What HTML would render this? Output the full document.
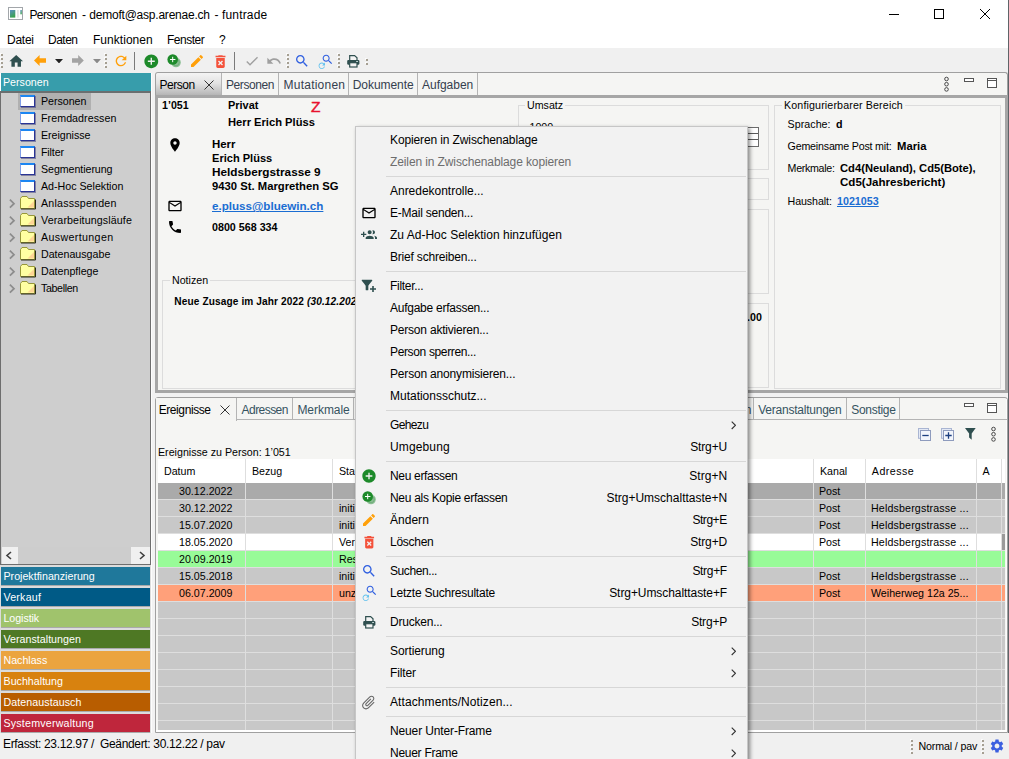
<!DOCTYPE html>
<html lang="de"><head><meta charset="utf-8"><title>Personen - funtrade</title>
<style>
*{box-sizing:border-box;margin:0;padding:0}
html,body{width:1009px;height:759px;overflow:hidden;background:#fff}
body{position:relative;font-family:"Liberation Sans",Arial,sans-serif;font-size:10.667px;color:#000}
.a{position:absolute;display:block}
.t{position:absolute;white-space:pre;line-height:14px;height:14px}
.s{font-size:12px;letter-spacing:-0.1px;line-height:16px;height:16px}
.b{font-weight:bold}
.tab{position:absolute;top:0;height:22px;border-right:1px solid #b4b4b4;font-size:12px;line-height:16px;padding:4px 0 0 0;color:#34404e;white-space:pre}
.bar{position:absolute;left:1px;width:149px;height:18px;color:#fff;padding:2px 0 0 2.5px;line-height:14px;white-space:pre;box-shadow:0 1px 0 #aaa}
.ti{position:absolute;left:20px;width:15px;height:12px;background:#fff;border:1px solid #2a3494;border-left-color:#7f9de6;border-top:2px solid #1c86f2;box-shadow:1px 1px 0 rgba(70,70,130,.55)}
.fo{position:absolute;left:20px;width:15px;height:12px}
.tl{position:absolute;left:41px;white-space:pre;line-height:14px}
.gb{position:absolute;border:1px solid #dcdcdc}
.gl{position:absolute;background:#f5f5f3;padding:0 2px;white-space:pre;line-height:14px;top:-8px}
.row{position:absolute;left:158px;width:847px;height:16px}
.c{position:absolute;top:0;height:17px;line-height:16px;white-space:pre}
.mi{position:absolute;left:390px;font-size:12px;line-height:22px;height:22px;white-space:pre;color:#000}
.sc{position:absolute;right:282px;font-size:12px;letter-spacing:-0.1px;line-height:22px;height:22px;white-space:pre;text-align:right}
.sep{position:absolute;left:386px;width:360px;height:1px;background:#d7d7d7}
</style></head><body>

<svg class="a" style="left:8px;top:7px" width="15" height="13" viewBox="0 0 15 13"><defs><linearGradient id="tg" x1="0" y1="0" x2=".4" y2="1"><stop offset="0" stop-color="#5b8fc4"/><stop offset="1" stop-color="#3aa24e"/></linearGradient></defs><rect x=".5" y=".5" width="14" height="12" fill="#fff" stroke="#a2a6aa"/><rect x="2" y="3" width="5.300" height="7.600" fill="url(#tg)"/><rect x="9" y="3" width="1.800" height="7.600" fill="#e4e4e4"/><rect x="12.200" y="3" width="1.800" height="4.300" fill="url(#tg)" opacity=".8"/></svg>
<div class="t s" style="left:29.4px;top:7px;letter-spacing:-0.524px;">Personen</div>
<div class="t s" style="left:81.9px;top:7px">-</div>
<div class="t s" style="left:89.3px;top:7px;letter-spacing:-0.222px;">demoft@asp.arenae.ch</div>
<div class="t s" style="left:214.5px;top:7px">-</div>
<div class="t s" style="left:222px;top:7px;letter-spacing:0.167px;">funtrade</div>
<svg class="a" style="left:880px;top:0" width="129" height="30" viewBox="0 0 129 30"><path d="M9 14.5h10" stroke="#000" fill="none"/><rect x="54.500" y="9.500" width="9" height="9" stroke="#000" fill="none"/><path d="M100 9l10 10M110 9l-10 10" stroke="#000" fill="none"/></svg>
<div class="t s" style="left:7px;top:32px;letter-spacing:-0.253px;">Datei</div>
<div class="t s" style="left:48px;top:32px;letter-spacing:-0.505px;">Daten</div>
<div class="t s" style="left:93px;top:32px;letter-spacing:0.036px;">Funktionen</div>
<div class="t s" style="left:167px;top:32px;letter-spacing:-0.497px;">Fenster</div>
<div class="t s" style="left:219px;top:32px;letter-spacing:-1.674px;">?</div>
<div class="a" style="left:0;top:48px;width:1009px;height:25px;background:#f0f0f0"></div>
<i class="a" style="left:1px;top:54px;width:2px;height:2px;background:#a59f92;box-shadow:-1px -1px 0 #fbfbfb"></i><i class="a" style="left:1px;top:58px;width:2px;height:2px;background:#a59f92;box-shadow:-1px -1px 0 #fbfbfb"></i><i class="a" style="left:1px;top:62px;width:2px;height:2px;background:#a59f92;box-shadow:-1px -1px 0 #fbfbfb"></i><i class="a" style="left:1px;top:66px;width:2px;height:2px;background:#a59f92;box-shadow:-1px -1px 0 #fbfbfb"></i>
<svg class="a" style="left:8px;top:52.8px" width="16.4" height="16.4" viewBox="0 0 24 24"><path fill="#2f4f4f" d="M10 20v-6h4v6h5v-8h3L12 3 2 12h3v8z"/></svg>
<svg class="a" style="left:33.900px;top:55.300px" width="12.300" height="11" viewBox="0 0 12.300 11"><path fill="#ffa00a" d="M0 5.500L5.600 0v3.200h6.700v4.600H5.600V11z"/></svg>
<svg class="a" style="left:54.600px;top:58.900px" width="8" height="4.400" viewBox="0 0 8 4.400"><path fill="#222" d="M0 0h8L4 4.400z"/></svg>
<svg class="a" style="left:72.100px;top:55.300px" width="11.800" height="11" viewBox="0 0 11.800 11"><path fill="#a3a3a3" d="M11.800 5.500L6.200 0v3.200H0v4.600h6.200V11z"/></svg>
<svg class="a" style="left:93.300px;top:58.900px" width="8" height="4.400" viewBox="0 0 8 4.400"><path fill="#8a8a8a" d="M0 0h8L4 4.400z"/></svg>
<i class="a" style="left:105px;top:54px;width:2px;height:2px;background:#a59f92;box-shadow:-1px -1px 0 #fbfbfb"></i><i class="a" style="left:105px;top:58px;width:2px;height:2px;background:#a59f92;box-shadow:-1px -1px 0 #fbfbfb"></i><i class="a" style="left:105px;top:62px;width:2px;height:2px;background:#a59f92;box-shadow:-1px -1px 0 #fbfbfb"></i><i class="a" style="left:105px;top:66px;width:2px;height:2px;background:#a59f92;box-shadow:-1px -1px 0 #fbfbfb"></i>
<svg class="a" style="left:112.6px;top:52.8px" width="16" height="16" viewBox="0 0 24 24"><path fill="#ffa00a" d="M17.65 6.35C16.2 4.9 14.21 4 12 4c-4.42 0-7.99 3.58-7.99 8s3.57 8 7.99 8c3.73 0 6.84-2.55 7.73-6h-2.08c-.82 2.33-3.04 4-5.65 4-3.31 0-6-2.69-6-6s2.69-6 6-6c1.66 0 3.14.69 4.22 1.78L13 11h7V4l-2.35 2.35z"/></svg>
<div class="a" style="left:134px;top:52px;width:1px;height:18px;background:#7a7a7a"></div>
<svg class="a" style="left:142.8px;top:52.6px" width="16.6" height="16.6" viewBox="0 0 24 24"><path fill="#1d8a2a" d="M12 2C6.48 2 2 6.48 2 12s4.48 10 10 10 10-4.48 10-10S17.52 2 12 2zm5 11h-4v4h-2v-4H7v-2h4V7h2v4h4v2z"/></svg>
<svg class="a" style="left:165.7px;top:53px" width="16" height="16" viewBox="0 0 16 16"><circle cx="10" cy="9.500" r="4.800" fill="#8cbf94"/><circle cx="10" cy="9.500" r="3.300" fill="none" stroke="#6aa874" stroke-width=".8"/><circle cx="6.700" cy="6.500" r="5.300" fill="#1d8a2a"/><path d="M6.700 3.800v5.400M4 6.500h5.400" stroke="#fff" stroke-width="1"/></svg>
<svg class="a" style="left:188.8px;top:52.5px" width="16" height="16" viewBox="0 0 24 24"><path fill="#ffa00a" d="M3 17.25V21h3.75L17.81 9.94l-3.75-3.75L3 17.25zM20.71 7.04c.39-.39.39-1.02 0-1.41l-2.34-2.34c-.39-.39-1.02-.39-1.41 0l-1.83 1.83 3.75 3.75 1.83-1.83z"/></svg>
<svg class="a" style="left:212px;top:52.5px" width="17" height="17" viewBox="0 0 24 24"><path fill="#f4523b" d="M6 19c0 1.1.9 2 2 2h8c1.1 0 2-.9 2-2V7H6v12zm2.46-7.12l1.41-1.41L12 12.59l2.12-2.12 1.41 1.41L13.41 14l2.12 2.12-1.41 1.41L12 15.41l-2.12 2.12-1.41-1.41L10.59 14l-2.13-2.12zM15.5 4l-1-1h-5l-1 1H5v2h14V4z"/></svg>
<div class="a" style="left:234px;top:52px;width:1px;height:18px;background:#7a7a7a"></div>
<svg class="a" style="left:243.5px;top:53px" width="16" height="16" viewBox="0 0 24 24"><path fill="#a0a0a0" d="M9 16.17L4.83 12l-1.42 1.41L9 19 21 7l-1.41-1.41z"/></svg>
<svg class="a" style="left:266px;top:53px" width="16" height="16" viewBox="0 0 24 24"><path fill="#a0a0a0" d="M12.5 8c-2.65 0-5.05.99-6.9 2.6L2 7v9h9l-3.62-3.62c1.39-1.16 3.16-1.88 5.12-1.88 3.54 0 6.55 2.31 7.6 5.5l2.37-.78C21.08 11.03 17.15 8 12.5 8z"/></svg>
<i class="a" style="left:287px;top:54px;width:2px;height:2px;background:#a59f92;box-shadow:-1px -1px 0 #fbfbfb"></i><i class="a" style="left:287px;top:58px;width:2px;height:2px;background:#a59f92;box-shadow:-1px -1px 0 #fbfbfb"></i><i class="a" style="left:287px;top:62px;width:2px;height:2px;background:#a59f92;box-shadow:-1px -1px 0 #fbfbfb"></i><i class="a" style="left:287px;top:66px;width:2px;height:2px;background:#a59f92;box-shadow:-1px -1px 0 #fbfbfb"></i>
<svg class="a" style="left:294px;top:53px" width="16" height="16" viewBox="0 0 24 24"><path fill="#2f5fe0" d="M15.5 14h-.79l-.28-.27C15.41 12.59 16 11.11 16 9.5 16 5.91 13.09 3 9.5 3S3 5.91 3 9.5 5.91 16 9.5 16c1.61 0 3.09-.59 4.23-1.57l.27.28v.79l5 4.99L20.49 19l-4.99-5zm-6 0C7.01 14 5 11.99 5 9.5S7.01 5 9.5 5 14 7.01 14 9.5 11.99 14 9.5 14z"/></svg>
<svg class="a" style="left:321px;top:52.7px" width="13" height="13" viewBox="0 0 24 24"><path fill="#2f5fe0" d="M15.5 14h-.79l-.28-.27C15.41 12.59 16 11.11 16 9.5 16 5.91 13.09 3 9.5 3S3 5.91 3 9.5 5.91 16 9.5 16c1.61 0 3.09-.59 4.23-1.57l.27.28v.79l5 4.99L20.49 19l-4.99-5zm-6 0C7.01 14 5 11.99 5 9.5S7.01 5 9.5 5 14 7.01 14 9.5 11.99 14 9.5 14z"/></svg>
<svg class="a" style="left:317px;top:60.8px" width="9.6" height="9.6" viewBox="0 0 24 24"><path fill="#5fc0ee" d="M17.65 6.35C16.2 4.9 14.21 4 12 4c-4.42 0-7.99 3.58-7.99 8s3.57 8 7.99 8c3.73 0 6.84-2.55 7.73-6h-2.08c-.82 2.33-3.04 4-5.65 4-3.31 0-6-2.69-6-6s2.69-6 6-6c1.66 0 3.14.69 4.22 1.78L13 11h7V4l-2.35 2.35z"/></svg>
<i class="a" style="left:338px;top:54px;width:2px;height:2px;background:#a59f92;box-shadow:-1px -1px 0 #fbfbfb"></i><i class="a" style="left:338px;top:58px;width:2px;height:2px;background:#a59f92;box-shadow:-1px -1px 0 #fbfbfb"></i><i class="a" style="left:338px;top:62px;width:2px;height:2px;background:#a59f92;box-shadow:-1px -1px 0 #fbfbfb"></i><i class="a" style="left:338px;top:66px;width:2px;height:2px;background:#a59f92;box-shadow:-1px -1px 0 #fbfbfb"></i>
<svg class="a" style="left:346.8px;top:54.8px" width="13" height="13" viewBox="0 0 13 13"><path d="M2.700 5.200V.6h4.900l2.400 2.200v2.400" fill="#f4f4f4" stroke="#2f4f4f" stroke-width="1.200"/><rect x=".2" y="4.900" width="12.200" height="4.800" rx="1.200" fill="#2f4f4f"/><rect x="2.700" y="7.700" width="7.300" height="4.300" fill="#f4f4f4" stroke="#2f4f4f" stroke-width="1.200"/><rect x="9.200" y="6" width="1.700" height="1" fill="#cfe0e0"/></svg>
<i class="a" style="left:366px;top:59px;width:2px;height:2px;background:#a59f92;box-shadow:-1px -1px 0 #fbfbfb"></i><i class="a" style="left:366px;top:63px;width:2px;height:2px;background:#a59f92;box-shadow:-1px -1px 0 #fbfbfb"></i>
<div class="a" style="left:1px;top:73px;width:150px;height:19px;background:#379dab"></div>
<div class="t" style="left:3px;top:75px;color:#fff">Personen</div>
<div class="a" style="left:0;top:91px;width:151px;height:474px;background:#cecece;border:1px solid #6e6e6e;border-top:2px solid #6a6f70"></div>
<div class="a" style="left:18px;top:93px;width:73px;height:17px;background:#b0b0b0"></div>
<i class="ti" style="top:95px"></i>
<div class="tl" style="top:94px;letter-spacing:-0.038px">Personen</div>
<i class="ti" style="top:112px"></i>
<div class="tl" style="top:111px;letter-spacing:0.067px">Fremdadressen</div>
<i class="ti" style="top:129px"></i>
<div class="tl" style="top:128px;letter-spacing:-0.034px">Ereignisse</div>
<i class="ti" style="top:146px"></i>
<div class="tl" style="top:145px;letter-spacing:-0.141px">Filter</div>
<i class="ti" style="top:163px"></i>
<div class="tl" style="top:162px;letter-spacing:-0.062px">Segmentierung</div>
<i class="ti" style="top:180px"></i>
<div class="tl" style="top:179px;letter-spacing:-0.001px">Ad-Hoc Selektion</div>
<svg class="a" style="left:9px;top:199px" width="7" height="10" viewBox="0 0 7 10"><path d="M.9 .7L5 4.700.9 8.700" stroke="#8c8c8c" fill="none" stroke-width="1.700"/></svg>
<svg class="fo" style="top:196px;width:16px;height:14px" width="16" height="14" viewBox="0 0 16 14"><path d="M.5 12.500v-10l1.500-2h5l1.500 2h6v10z" fill="#ffffa2" stroke="#97973a"/><path d="M14 11.500H7.500L14 5z" fill="#ffc890" opacity=".75"/><path d="M1 13h14.500V3.500" stroke="#2a2a1a" fill="none"/></svg>
<div class="tl" style="top:196px;letter-spacing:0.213px">Anlassspenden</div>
<svg class="a" style="left:9px;top:216px" width="7" height="10" viewBox="0 0 7 10"><path d="M.9 .7L5 4.700.9 8.700" stroke="#8c8c8c" fill="none" stroke-width="1.700"/></svg>
<svg class="fo" style="top:213px;width:16px;height:14px" width="16" height="14" viewBox="0 0 16 14"><path d="M.5 12.500v-10l1.500-2h5l1.500 2h6v10z" fill="#ffffa2" stroke="#97973a"/><path d="M14 11.500H7.500L14 5z" fill="#ffc890" opacity=".75"/><path d="M1 13h14.500V3.500" stroke="#2a2a1a" fill="none"/></svg>
<div class="tl" style="top:213px;letter-spacing:0.115px">Verarbeitungsläufe</div>
<svg class="a" style="left:9px;top:233px" width="7" height="10" viewBox="0 0 7 10"><path d="M.9 .7L5 4.700.9 8.700" stroke="#8c8c8c" fill="none" stroke-width="1.700"/></svg>
<svg class="fo" style="top:230px;width:16px;height:14px" width="16" height="14" viewBox="0 0 16 14"><path d="M.5 12.500v-10l1.500-2h5l1.500 2h6v10z" fill="#ffffa2" stroke="#97973a"/><path d="M14 11.500H7.500L14 5z" fill="#ffc890" opacity=".75"/><path d="M1 13h14.500V3.500" stroke="#2a2a1a" fill="none"/></svg>
<div class="tl" style="top:230px;letter-spacing:0.364px">Auswertungen</div>
<svg class="a" style="left:9px;top:250px" width="7" height="10" viewBox="0 0 7 10"><path d="M.9 .7L5 4.700.9 8.700" stroke="#8c8c8c" fill="none" stroke-width="1.700"/></svg>
<svg class="fo" style="top:247px;width:16px;height:14px" width="16" height="14" viewBox="0 0 16 14"><path d="M.5 12.500v-10l1.500-2h5l1.500 2h6v10z" fill="#ffffa2" stroke="#97973a"/><path d="M14 11.500H7.500L14 5z" fill="#ffc890" opacity=".75"/><path d="M1 13h14.500V3.500" stroke="#2a2a1a" fill="none"/></svg>
<div class="tl" style="top:247px;letter-spacing:0.001px">Datenausgabe</div>
<svg class="a" style="left:9px;top:267px" width="7" height="10" viewBox="0 0 7 10"><path d="M.9 .7L5 4.700.9 8.700" stroke="#8c8c8c" fill="none" stroke-width="1.700"/></svg>
<svg class="fo" style="top:264px;width:16px;height:14px" width="16" height="14" viewBox="0 0 16 14"><path d="M.5 12.500v-10l1.500-2h5l1.500 2h6v10z" fill="#ffffa2" stroke="#97973a"/><path d="M14 11.500H7.500L14 5z" fill="#ffc890" opacity=".75"/><path d="M1 13h14.500V3.500" stroke="#2a2a1a" fill="none"/></svg>
<div class="tl" style="top:264px;letter-spacing:-0.003px">Datenpflege</div>
<svg class="a" style="left:9px;top:284px" width="7" height="10" viewBox="0 0 7 10"><path d="M.9 .7L5 4.700.9 8.700" stroke="#8c8c8c" fill="none" stroke-width="1.700"/></svg>
<svg class="fo" style="top:281px;width:16px;height:14px" width="16" height="14" viewBox="0 0 16 14"><path d="M.5 12.500v-10l1.500-2h5l1.500 2h6v10z" fill="#ffffa2" stroke="#97973a"/><path d="M14 11.500H7.500L14 5z" fill="#ffc890" opacity=".75"/><path d="M1 13h14.500V3.500" stroke="#2a2a1a" fill="none"/></svg>
<div class="tl" style="top:281px;letter-spacing:-0.36px">Tabellen</div>
<div class="a" style="left:2px;top:547px;width:148px;height:17px;background:#f0f0f0"></div>
<div class="a" style="left:18px;top:547px;width:113px;height:17px;background:#cdcdcd"></div>
<svg class="a" style="left:5px;top:551px" width="8" height="9" viewBox="0 0 8 9"><path d="M6 1L2 4.500 6 8" stroke="#404040" fill="none" stroke-width="1.600"/></svg>
<svg class="a" style="left:138px;top:551px" width="8" height="9" viewBox="0 0 8 9"><path d="M2 1l4 3.500L2 8" stroke="#404040" fill="none" stroke-width="1.600"/></svg>
<div class="a" style="left:0;top:565px;width:152px;height:168px;background:#dcdcdc"></div>
<div class="bar" style="top:567px;background:#1f789b;letter-spacing:-0.001px">Projektfinanzierung</div>
<div class="bar" style="top:588px;background:#005a86;letter-spacing:0.206px">Verkauf</div>
<div class="bar" style="top:609px;background:#a0c36c;letter-spacing:-0.067px">Logistik</div>
<div class="bar" style="top:630px;background:#4e7824;letter-spacing:0.022px">Veranstaltungen</div>
<div class="bar" style="top:651px;background:#eba43f;letter-spacing:-0.01px">Nachlass</div>
<div class="bar" style="top:672px;background:#d8820f;letter-spacing:0.019px">Buchhaltung</div>
<div class="bar" style="top:693px;background:#b85d00;letter-spacing:0.07px">Datenaustausch</div>
<div class="bar" style="top:714px;background:#bf263c;letter-spacing:0.203px">Systemverwaltung</div>
<div class="a" style="left:151px;top:73px;width:857px;height:660px;background:#f2f2f2;border-left:1px solid #fdfdfd"></div>
<div class="a" style="left:155px;top:72px;width:853px;height:321px;background:#f5f5f3;border:1px solid #a0a0a0;border-bottom:0;border-radius:3px 3px 0 0"></div>
<div class="a" style="left:156px;top:73px;width:851px;height:23px;">
<div class="tab" style="left:0;width:66px;height:23px;padding-left:3.500px;letter-spacing:-0.484px;color:#000;background:linear-gradient(#f4f4f4,#e2e2e2 45%,#b2b2b2);border-radius:3px 0 0 0">Person<svg class="a" style="left:47.500px;top:6.500px" width="10" height="10" viewBox="0 0 10 10"><path d="M.5 .5l9 9M9.500 .5l-9 9" stroke="#333" fill="none" stroke-width="1"/></svg></div>
<div class="tab" style="left:66px;width:57px;padding-left:4px;letter-spacing:-0.424px">Personen</div>
<div class="tab" style="left:123px;width:70px;padding-left:4.600000000000023px;letter-spacing:0.225px">Mutationen</div>
<div class="tab" style="left:193px;width:69px;padding-left:3.6999999999999886px;letter-spacing:-0.046px">Dokumente</div>
<div class="tab" style="left:262px;width:60px;padding-left:4.100000000000023px;letter-spacing:-0.04px">Aufgaben</div>
<div class="a" style="left:66px;top:22px;width:785px;height:1px;background:#b4b4b4"></div>
</div>
<svg class="a" style="left:943px;top:76px" width="7" height="17" viewBox="0 0 7 17"><g fill="none" stroke="#484848" stroke-width="1"><circle cx="3.500" cy="3" r="1.800"/><circle cx="3.500" cy="8.200" r="1.800"/><circle cx="3.500" cy="13.400" r="1.800"/></g></svg>
<div class="a" style="left:964px;top:78px;width:10px;height:4px;border:1px solid #555;background:#fff"></div><div class="a" style="left:987px;top:78px;width:10px;height:10px;border:1px solid #555;border-top:3px double #555;background:#fff"></div>
<div class="a" style="left:155px;top:95px;width:853px;height:298px;border:solid #a6a6a6;border-width:3px 3px 3px 3px"></div>
<div class="t b" style="left:162px;top:98px">1’051</div>
<div class="t b" style="left:227.5px;top:98px;transform:scaleX(1.0254);transform-origin:0 50%;">Privat</div>
<div class="t" style="left:311px;top:99px;font-size:15.500px;line-height:16px;height:16px;color:#e8112d;-webkit-text-stroke:.45px #e8112d">Z</div>
<div class="t b" style="left:227.5px;top:115px;transform:scaleX(1.0482);transform-origin:0 50%;">Herr Erich Plüss</div>
<svg class="a" style="left:167px;top:137px" width="16" height="16" viewBox="0 0 24 24"><path fill="#000" d="M12 2C8.13 2 5 5.13 5 9c0 5.25 7 13 7 13s7-7.75 7-13c0-3.87-3.13-7-7-7zm0 9.5c-1.38 0-2.5-1.12-2.5-2.5s1.12-2.5 2.5-2.5 2.5 1.12 2.5 2.5-1.12 2.5-2.5 2.5z"/></svg>
<div class="t b" style="left:212.2px;top:137px;transform:scaleX(1.0712);transform-origin:0 50%;">Herr</div>
<div class="t b" style="left:212.2px;top:151px;transform:scaleX(1.0379);transform-origin:0 50%;">Erich Plüss</div>
<div class="t b" style="left:212.2px;top:165px;transform:scaleX(1.1044);transform-origin:0 50%;">Heldsbergstrasse 9</div>
<div class="t b" style="left:212.2px;top:179px;transform:scaleX(1.0581);transform-origin:0 50%;">9430 St. Margrethen SG</div>
<svg class="a" style="left:167px;top:198px" width="16" height="16" viewBox="0 0 24 24"><path fill="#000" d="M20 4H4c-1.1 0-1.99.9-1.99 2L2 18c0 1.1.9 2 2 2h16c1.1 0 2-.9 2-2V6c0-1.1-.9-2-2-2zm0 14H4V8l8 5 8-5v10zm-8-7L4 6h16l-8 5z"/></svg>
<div class="t b" style="left:212.2px;top:199px;transform:scaleX(1.0902);transform-origin:0 50%;color:#1a6dd2;text-decoration:underline">e.pluss@bluewin.ch</div>
<svg class="a" style="left:167px;top:219px" width="16" height="16" viewBox="0 0 24 24"><path fill="#000" d="M6.62 10.79c1.44 2.83 3.76 5.14 6.59 6.59l2.2-2.2c.27-.27.67-.36 1.02-.24 1.12.37 2.33.57 3.57.57.55 0 1 .45 1 1V20c0 .55-.45 1-1 1-9.39 0-17-7.61-17-17 0-.55.45-1 1-1h3.5c.55 0 1 .45 1 1 0 1.25.2 2.45.57 3.57.11.35.03.74-.25 1.02l-2.2 2.2z"/></svg>
<div class="t b" style="left:212.2px;top:220px;transform:scaleX(1.0053);transform-origin:0 50%;">0800 568 334</div>
<div class="gb" style="left:162px;top:280px;width:350px;height:109px"><span class="gl" style="left:7px">Notizen</span></div>
<div class="t b" style="left:174.300px;top:295px;font-size:10.100px;letter-spacing:0.123px">Neue Zusage im Jahr 2022 <i>(30.12.2022)</i></div>
<div class="gb" style="left:518px;top:105px;width:251px;height:65px"><span class="gl" style="left:6px">Umsatz</span></div>
<div class="t" style="left:529.500px;top:120px">1000</div>
<div class="a" style="left:740px;top:127px;width:19px;height:20px;border:1px solid #6c6c6c;background:linear-gradient(#fff 0 5px,#5a5a5a 5px 6px,#fff 6px 11px,#5a5a5a 11px 12px,#fff 12px)"></div>
<div class="gb" style="left:518px;top:178px;width:251px;height:22px"></div>
<div class="gb" style="left:518px;top:209px;width:251px;height:85px"></div>
<div class="gb" style="left:518px;top:303px;width:251px;height:85px"></div>
<div class="t b" style="left:741.200px;top:310px">0.00</div>
<div class="gb" style="left:774px;top:105px;width:227px;height:284px"><span class="gl" style="left:7px;letter-spacing:0.143px">Konfigurierbarer Bereich</span></div>
<div class="t" style="left:787.6px;top:117px;letter-spacing:0.044px;">Sprache:</div>
<div class="t b" style="left:836px;top:117px;">d</div>
<div class="t" style="left:787.6px;top:139px;letter-spacing:-0.194px;">Gemeinsame Post mit:</div>
<div class="t b" style="left:897.3px;top:139px;transform:scaleX(1.0587);transform-origin:0 50%;">Maria</div>
<div class="t" style="left:787.6px;top:161px;letter-spacing:-0.311px;">Merkmale:</div>
<div class="t b" style="left:840.3px;top:161px;transform:scaleX(1.0512);transform-origin:0 50%;">Cd4(Neuland), Cd5(Bote),</div>
<div class="t b" style="left:840.3px;top:175px;transform:scaleX(1.0842);transform-origin:0 50%;">Cd5(Jahresbericht)</div>
<div class="t" style="left:787.6px;top:194px;letter-spacing:-0.095px;">Haushalt:</div>
<div class="t b" style="left:837.4px;top:194px;transform:scaleX(1.0042);transform-origin:0 50%;color:#1a6dd2;text-decoration:underline">1021053</div>
<div class="a" style="left:155px;top:397px;width:853px;height:336px;background:#f5f5f3;border:1px solid #a0a0a0;border-radius:3px 3px 0 0"></div>
<div class="a" style="left:156px;top:730px;width:851px;height:2px;background:#fff"></div><div class="a" style="left:1006px;top:399px;width:1px;height:333px;background:#fcfcfc"></div>
<div class="a" style="left:156px;top:398px;width:851px;height:22px;">
<div class="tab" style="left:0;width:81px;height:23px;padding-left:2.700px;letter-spacing:-0.414px;color:#000;background:#f5f5f3">Ereignisse<svg class="a" style="left:63.500px;top:6.500px" width="10" height="10" viewBox="0 0 10 10"><path d="M.5 .5l9 9M9.500 .5l-9 9" stroke="#333" fill="none" stroke-width="1"/></svg></div>
<div class="tab" style="left:81px;width:56px;padding-left:4.599999999999994px;letter-spacing:-0.556px;color:#35535f">Adressen</div>
<div class="tab" style="left:137px;width:61px;padding-left:4.399999999999977px;letter-spacing:-0.039px;color:#35535f">Merkmale</div>
<div class="tab" style="left:198px;width:54px;padding-left:4px;letter-spacing:-0.674px;color:#35535f">Spenden</div>
<div class="tab" style="left:543px;width:55px;padding-left:4px;letter-spacing:0.257px;color:#35535f">Aktionen</div>
<div class="tab" style="left:598px;width:93px;padding-left:4.2000000000000455px;letter-spacing:-0.228px;color:#35535f">Veranstaltungen</div>
<div class="tab" style="left:691px;width:53px;padding-left:4.2000000000000455px;letter-spacing:-0.286px;color:#35535f">Sonstige</div>
<div class="a" style="left:81px;top:21px;width:770px;height:1px;background:#b4b4b4"></div>
</div>
<div class="a" style="left:964px;top:403px;width:10px;height:4px;border:1px solid #555;background:#fff"></div><div class="a" style="left:987px;top:403px;width:10px;height:10px;border:1px solid #555;border-top:3px double #555;background:#fff"></div>
<svg class="a" style="left:918px;top:428px" width="13" height="13" viewBox="0 0 13 13"><rect x=".5" y=".5" width="10" height="9.800" fill="#e3e9f5" stroke="#a9b5d2"/><rect x="2.500" y="2.500" width="10" height="10" fill="#f2f5fc" stroke="#8e9bbd"/><path d="M4.300 7.500h6.400" stroke="#1c3f80" stroke-width="1.300"/></svg>
<svg class="a" style="left:941px;top:428px" width="13" height="13" viewBox="0 0 13 13"><rect x=".5" y=".5" width="10" height="9.800" fill="#e3e9f5" stroke="#a9b5d2"/><rect x="2.500" y="2.500" width="10" height="10" fill="#f2f5fc" stroke="#8e9bbd"/><path d="M4.300 7.500h6.400M7.500 4.300v6.400" stroke="#1c3f80" stroke-width="1.300"/></svg>
<svg class="a" style="left:964.500px;top:427.900px" width="11" height="12" viewBox="0 0 11 12"><path fill="#2f4f4f" d="M0 0h10.700L6.700 5.400v6.400L4.100 9.500V5.400z"/></svg>
<svg class="a" style="left:989.7px;top:426.4px" width="7" height="17" viewBox="0 0 7 17"><g fill="none" stroke="#484848" stroke-width="1"><circle cx="3.500" cy="3" r="1.800"/><circle cx="3.500" cy="8.200" r="1.800"/><circle cx="3.500" cy="13.400" r="1.800"/></g></svg>
<div class="t" style="left:158px;top:445px">Ereignisse zu Person: 1’051</div>
<div class="a" style="left:158px;top:459px;width:847px;height:271px;background:#c8c8c8"></div>
<div class="a" style="left:158px;top:459px;width:847px;height:24px;background:#fff"></div>
<div class="t" style="left:164px;top:464px;">Datum</div>
<div class="t" style="left:252px;top:464px;">Bezug</div>
<div class="t" style="left:339px;top:464px;">Status</div>
<div class="t" style="left:820px;top:464px;letter-spacing:-0.021px;">Kanal</div>
<div class="t" style="left:871.8px;top:464px;letter-spacing:0.478px;">Adresse</div>
<div class="t" style="left:982.6px;top:464px;">A</div>
<div class="row" style="top:483px;background:#aaaaaa"><span class="c" style="left:21px">30.12.2022</span><span class="c" style="left:181px"></span><span class="c" style="left:661px">Post</span><span class="c" style="left:713px;letter-spacing:0px"></span></div>
<div class="a" style="left:158px;top:499px;width:847px;height:1px;background:#dedede"></div>
<div class="row" style="top:500px;background:#c8c8c8"><span class="c" style="left:21px">30.12.2022</span><span class="c" style="left:181px">initial</span><span class="c" style="left:661px">Post</span><span class="c" style="left:713px;letter-spacing:0.15px">Heldsbergstrasse ...</span></div>
<div class="a" style="left:158px;top:516px;width:847px;height:1px;background:#dedede"></div>
<div class="row" style="top:517px;background:#c8c8c8"><span class="c" style="left:21px">15.07.2020</span><span class="c" style="left:181px">initial</span><span class="c" style="left:661px">Post</span><span class="c" style="left:713px;letter-spacing:0.15px">Heldsbergstrasse ...</span></div>
<div class="a" style="left:158px;top:533px;width:847px;height:1px;background:#dedede"></div>
<div class="row" style="top:534px;background:#ffffff"><span class="c" style="left:21px">18.05.2020</span><span class="c" style="left:181px">Versand</span><span class="c" style="left:661px">Post</span><span class="c" style="left:713px;letter-spacing:0.15px">Heldsbergstrasse ...</span></div>
<div class="a" style="left:158px;top:550px;width:847px;height:1px;background:#dedede"></div>
<div class="row" style="top:551px;background:#98fb98"><span class="c" style="left:21px">20.09.2019</span><span class="c" style="left:181px">Reserviert</span><span class="c" style="left:661px"></span><span class="c" style="left:713px;letter-spacing:0px"></span></div>
<div class="a" style="left:158px;top:567px;width:847px;height:1px;background:#dedede"></div>
<div class="row" style="top:568px;background:#c8c8c8"><span class="c" style="left:21px">15.05.2018</span><span class="c" style="left:181px">initial</span><span class="c" style="left:661px">Post</span><span class="c" style="left:713px;letter-spacing:0.15px">Heldsbergstrasse ...</span></div>
<div class="a" style="left:158px;top:584px;width:847px;height:1px;background:#dedede"></div>
<div class="row" style="top:585px;background:#ffa07a"><span class="c" style="left:21px">06.07.2009</span><span class="c" style="left:181px">unzustellbar</span><span class="c" style="left:661px">Post</span><span class="c" style="left:713px;letter-spacing:-0.008px">Weiherweg 12a 25...</span></div>
<div class="a" style="left:158px;top:601px;width:847px;height:1px;background:#dedede"></div>
<div class="a" style="left:158px;top:618px;width:847px;height:1px;background:#dedede"></div>
<div class="a" style="left:158px;top:635px;width:847px;height:1px;background:#dedede"></div>
<div class="a" style="left:158px;top:652px;width:847px;height:1px;background:#dedede"></div>
<div class="a" style="left:158px;top:669px;width:847px;height:1px;background:#dedede"></div>
<div class="a" style="left:158px;top:686px;width:847px;height:1px;background:#dedede"></div>
<div class="a" style="left:158px;top:703px;width:847px;height:1px;background:#dedede"></div>
<div class="a" style="left:158px;top:720px;width:847px;height:1px;background:#dedede"></div>
<div class="a" style="left:158px;top:737px;width:847px;height:1px;background:#dedede"></div>
<div class="a" style="left:245px;top:459px;width:1px;height:271px;background:#dedede"></div>
<div class="a" style="left:332px;top:459px;width:1px;height:271px;background:#dedede"></div>
<div class="a" style="left:813px;top:459px;width:1px;height:271px;background:#dedede"></div>
<div class="a" style="left:865px;top:459px;width:1px;height:271px;background:#dedede"></div>
<div class="a" style="left:976px;top:459px;width:1px;height:271px;background:#dedede"></div>
<div class="a" style="left:1001px;top:459px;width:1px;height:271px;background:#dedede"></div>
<div class="a" style="left:1002px;top:534px;width:3px;height:16px;background:#9a9a9a"></div>
<div class="a" style="left:1008px;top:0;width:1px;height:759px;background:#5f6468"></div>
<div class="a" style="left:0;top:733px;width:1009px;height:26px;background:#f0f0f0"></div>
<div class="t s" style="left:3px;top:736px;letter-spacing:-0.337px;">Erfasst: 23.12.97 /  Geändert: 30.12.22 / pav</div>
<i class="a" style="left:911px;top:739.5px;width:2px;height:2px;background:#a59f92;box-shadow:-1px -1px 0 #fbfbfb"></i><i class="a" style="left:911px;top:743.5px;width:2px;height:2px;background:#a59f92;box-shadow:-1px -1px 0 #fbfbfb"></i><i class="a" style="left:911px;top:747.5px;width:2px;height:2px;background:#a59f92;box-shadow:-1px -1px 0 #fbfbfb"></i><i class="a" style="left:911px;top:751.5px;width:2px;height:2px;background:#a59f92;box-shadow:-1px -1px 0 #fbfbfb"></i>
<i class="a" style="left:982px;top:739.5px;width:2px;height:2px;background:#a59f92;box-shadow:-1px -1px 0 #fbfbfb"></i><i class="a" style="left:982px;top:743.5px;width:2px;height:2px;background:#a59f92;box-shadow:-1px -1px 0 #fbfbfb"></i><i class="a" style="left:982px;top:747.5px;width:2px;height:2px;background:#a59f92;box-shadow:-1px -1px 0 #fbfbfb"></i><i class="a" style="left:982px;top:751.5px;width:2px;height:2px;background:#a59f92;box-shadow:-1px -1px 0 #fbfbfb"></i>
<div class="t" style="left:918.4px;top:738.5px;letter-spacing:-0.124px;">Normal / pav</div>
<svg class="a" style="left:989px;top:738px" width="16" height="16" viewBox="0 0 24 24"><path fill="#3b5fe0" d="M19.14 12.94c.04-.3.06-.61.06-.94 0-.32-.02-.64-.07-.94l2.030-1.580c.18-.14.23-.41.12-.61l-1.920-3.320c-.12-.22-.37-.29-.59-.22l-2.390.960c-.5-.38-1.030-.7-1.620-.94l-.36-2.540c-.04-.24-.24-.41-.48-.41h-3.840c-.24 0-.43.17-.47.41l-.36 2.540c-.59.24-1.130.57-1.620.94l-2.390-.960c-.22-.08-.47 0-.59.22L2.740 8.870c-.12.21-.08.47.12.61l2.030 1.580c-.05.3-.09.63-.09.94s.02.64.07.94l-2.030 1.580c-.18.14-.23.41-.12.61l1.920 3.320c.12.22.37.29.59.22l2.390-.960c.5.38 1.030.7 1.620.94l.36 2.540c.05.24.24.41.48.41h3.840c.24 0 .44-.17.47-.41l.36-2.540c.59-.24 1.130-.56 1.620-.94l2.390.960c.22.08.47 0 .59-.22l1.920-3.320c.12-.22.07-.47-.12-.61l-2.010-1.580zM12 15.600c-1.980 0-3.600-1.620-3.600-3.600s1.620-3.600 3.600-3.600 3.600 1.620 3.600 3.600-1.620 3.600-3.600 3.600z"/></svg>
<div class="a" style="left:355px;top:126px;width:393px;height:640px;background:#f2f2f2;border:1px solid #c6c6c6;box-shadow:2px 2px 4px rgba(0,0,0,.45)"></div>
<div class="mi" style="top:129px;color:#000;letter-spacing:-0.122px">Kopieren in Zwischenablage</div>
<div class="mi" style="top:151px;color:#6d6d6d;letter-spacing:-0.112px">Zeilen in Zwischenablage kopieren</div>
<div class="sep" style="top:176px"></div>
<div class="mi" style="top:180px;color:#000;letter-spacing:-0.021px">Anredekontrolle...</div>
<div class="mi" style="top:202px;color:#000;letter-spacing:-0.227px">E-Mail senden...</div>
<svg class="a" style="left:361px;top:205px" width="16" height="16" viewBox="0 0 24 24"><path fill="#000" d="M20 4H4c-1.1 0-1.99.9-1.99 2L2 18c0 1.1.9 2 2 2h16c1.1 0 2-.9 2-2V6c0-1.1-.9-2-2-2zm0 14H4V8l8 5 8-5v10zm-8-7L4 6h16l-8 5z"/></svg>
<div class="mi" style="top:224px;color:#000;letter-spacing:0.014px">Zu Ad-Hoc Selektion hinzufügen</div>
<svg class="a" style="left:361px;top:227px" width="16" height="16" viewBox="0 0 24 24"><path fill="#2f4f4f" d="M8 10H5V7H3v3H0v2h3v3h2v-3h3v-2zm10 1c1.660 0 2.990-1.340 2.990-3S19.660 5 18 5c-.32 0-.63.05-.91.14.57.81.9 1.790.9 2.860s-.34 2.040-.9 2.860c.28.09.59.14.91.14zm-5 0c1.660 0 2.990-1.340 2.990-3S14.660 5 13 5c-1.660 0-3 1.340-3 3s1.340 3 3 3zm6.620 2.160c.83.73 1.380 1.660 1.380 2.840v2h3v-2c0-1.540-2.370-2.490-4.380-2.840zM13 13c-2 0-6 1-6 3v2h12v-2c0-2-4-3-6-3z"/></svg>
<div class="mi" style="top:246px;color:#000;letter-spacing:-0.191px">Brief schreiben...</div>
<div class="sep" style="top:271px"></div>
<div class="mi" style="top:275px;color:#000;letter-spacing:-0.296px">Filter...</div>
<svg class="a" style="left:359px;top:277px" width="16" height="16" viewBox="0 0 24 24"><path fill="#2f4f4f" d="M4.25 5.61C6.27 8.2 10 13 10 13v6c0 .55.45 1 1 1h2c.55 0 1-.45 1-1v-6s3.72-4.8 5.74-7.39A.998.998 0 0 0 18.950 4H5.040c-.83 0-1.300.95-.79 1.610z"/></svg>
<svg class="a" style="left:370px;top:286px" width="6" height="6" viewBox="0 0 6 6"><path d="M3 0v6M0 3h6" stroke="#2f4f4f" stroke-width="1.600"/></svg>
<div class="mi" style="top:297px;color:#000;letter-spacing:-0.254px">Aufgabe erfassen...</div>
<div class="mi" style="top:319px;color:#000;letter-spacing:-0.206px">Person aktivieren...</div>
<div class="mi" style="top:341px;color:#000;letter-spacing:-0.353px">Person sperren...</div>
<div class="mi" style="top:363px;color:#000;letter-spacing:-0.177px">Person anonymisieren...</div>
<div class="mi" style="top:385px;color:#000;letter-spacing:-0.012px">Mutationsschutz...</div>
<div class="sep" style="top:410px"></div>
<div class="mi" style="top:414px;color:#000;letter-spacing:-0.646px">Gehezu</div>
<svg class="a" style="left:730px;top:420.5px" width="6" height="9" viewBox="0 0 6 9"><path d="M1.700 .6l3.700 3.700-3.700 3.700" stroke="#333" fill="none" stroke-width="1.100"/></svg>
<div class="mi" style="top:436px;color:#000;letter-spacing:0.128px">Umgebung</div>
<div class="mi" style="left:690.2px;top:436px;letter-spacing:-0.136px">Strg+U</div>
<div class="sep" style="top:461px"></div>
<div class="mi" style="top:465px;color:#000;letter-spacing:-0.325px">Neu erfassen</div>
<div class="mi" style="left:689.2px;top:465px;letter-spacing:0.064px">Strg+N</div>
<svg class="a" style="left:361px;top:468px" width="16" height="16" viewBox="0 0 24 24"><path fill="#1d8a2a" d="M12 2C6.48 2 2 6.48 2 12s4.48 10 10 10 10-4.48 10-10S17.52 2 12 2zm5 11h-4v4h-2v-4H7v-2h4V7h2v4h4v2z"/></svg>
<div class="mi" style="top:487px;color:#000;letter-spacing:-0.299px">Neu als Kopie erfassen</div>
<div class="mi" style="left:606.4px;top:487px;letter-spacing:0.004px">Strg+Umschalttaste+N</div>
<svg class="a" style="left:361px;top:490px" width="16" height="16" viewBox="0 0 16 16"><circle cx="10" cy="9.500" r="4.800" fill="#8cbf94"/><circle cx="10" cy="9.500" r="3.300" fill="none" stroke="#6aa874" stroke-width=".8"/><circle cx="6.700" cy="6.500" r="5.300" fill="#1d8a2a"/><path d="M6.700 3.800v5.400M4 6.500h5.400" stroke="#fff" stroke-width="1"/></svg>
<div class="mi" style="top:509px;color:#000;letter-spacing:0.021px">Ändern</div>
<div class="mi" style="left:692.4px;top:509px;letter-spacing:-0.444px">Strg+E</div>
<svg class="a" style="left:361px;top:512px" width="16" height="16" viewBox="0 0 24 24"><path fill="#ffa00a" d="M3 17.25V21h3.75L17.81 9.94l-3.75-3.75L3 17.25zM20.71 7.04c.39-.39.39-1.02 0-1.41l-2.34-2.34c-.39-.39-1.02-.39-1.41 0l-1.83 1.83 3.75 3.75 1.83-1.83z"/></svg>
<div class="mi" style="top:531px;color:#000;letter-spacing:-0.278px">Löschen</div>
<div class="mi" style="left:690.2px;top:531px;letter-spacing:-0.136px">Strg+D</div>
<svg class="a" style="left:361px;top:534px" width="16.5" height="16.5" viewBox="0 0 24 24"><path fill="#f4523b" d="M6 19c0 1.1.9 2 2 2h8c1.1 0 2-.9 2-2V7H6v12zm2.46-7.12l1.41-1.41L12 12.59l2.12-2.12 1.41 1.41L13.41 14l2.12 2.12-1.41 1.41L12 15.41l-2.12 2.12-1.41-1.41L10.59 14l-2.13-2.12zM15.5 4l-1-1h-5l-1 1H5v2h14V4z"/></svg>
<div class="sep" style="top:556px"></div>
<div class="mi" style="top:560px;color:#000;letter-spacing:-0.413px">Suchen...</div>
<div class="mi" style="left:692.4px;top:560px;letter-spacing:-0.309px">Strg+F</div>
<svg class="a" style="left:361px;top:563px" width="16" height="16" viewBox="0 0 24 24"><path fill="#2f5fe0" d="M15.5 14h-.79l-.28-.27C15.41 12.59 16 11.11 16 9.5 16 5.91 13.09 3 9.5 3S3 5.91 3 9.5 5.91 16 9.5 16c1.61 0 3.09-.59 4.23-1.57l.27.28v.79l5 4.99L20.49 19l-4.99-5zm-6 0C7.01 14 5 11.99 5 9.5S7.01 5 9.5 5 14 7.01 14 9.5 11.99 14 9.5 14z"/></svg>
<div class="mi" style="top:582px;color:#000;letter-spacing:-0.221px">Letzte Suchresultate</div>
<div class="mi" style="left:609.2px;top:582px;letter-spacing:-0.073px">Strg+Umschalttaste+F</div>
<svg class="a" style="left:365.2px;top:584.4px" width="13" height="13" viewBox="0 0 24 24"><path fill="#2f5fe0" d="M15.5 14h-.79l-.28-.27C15.41 12.59 16 11.11 16 9.5 16 5.91 13.09 3 9.5 3S3 5.91 3 9.5 5.91 16 9.5 16c1.61 0 3.09-.59 4.23-1.57l.27.28v.79l5 4.99L20.49 19l-4.99-5zm-6 0C7.01 14 5 11.99 5 9.5S7.01 5 9.5 5 14 7.01 14 9.5 11.99 14 9.5 14z"/></svg>
<svg class="a" style="left:361px;top:592.5px" width="9.6" height="9.6" viewBox="0 0 24 24"><path fill="#5fc0ee" d="M17.65 6.35C16.2 4.9 14.21 4 12 4c-4.42 0-7.99 3.58-7.99 8s3.57 8 7.99 8c3.73 0 6.84-2.55 7.73-6h-2.08c-.82 2.33-3.04 4-5.65 4-3.31 0-6-2.69-6-6s2.69-6 6-6c1.66 0 3.14.69 4.22 1.78L13 11h7V4l-2.35 2.35z"/></svg>
<div class="sep" style="top:607px"></div>
<div class="mi" style="top:611px;color:#000;letter-spacing:-0.221px">Drucken...</div>
<div class="mi" style="left:691.2px;top:611px;letter-spacing:-0.204px">Strg+P</div>
<svg class="a" style="left:362.8px;top:615.8px" width="13" height="13" viewBox="0 0 13 13"><path d="M2.700 5.200V.6h4.900l2.400 2.200v2.400" fill="#f4f4f4" stroke="#2f4f4f" stroke-width="1.200"/><rect x=".2" y="4.900" width="12.200" height="4.800" rx="1.200" fill="#2f4f4f"/><rect x="2.700" y="7.700" width="7.300" height="4.300" fill="#f4f4f4" stroke="#2f4f4f" stroke-width="1.200"/><rect x="9.200" y="6" width="1.700" height="1" fill="#cfe0e0"/></svg>
<div class="sep" style="top:636px"></div>
<div class="mi" style="top:640px;color:#000;letter-spacing:-0.085px">Sortierung</div>
<svg class="a" style="left:730px;top:646.5px" width="6" height="9" viewBox="0 0 6 9"><path d="M1.700 .6l3.700 3.700-3.700 3.700" stroke="#333" fill="none" stroke-width="1.100"/></svg>
<div class="mi" style="top:662px;color:#000;letter-spacing:-0.153px">Filter</div>
<svg class="a" style="left:730px;top:668.5px" width="6" height="9" viewBox="0 0 6 9"><path d="M1.700 .6l3.700 3.700-3.700 3.700" stroke="#333" fill="none" stroke-width="1.100"/></svg>
<div class="sep" style="top:687px"></div>
<div class="mi" style="top:691px;color:#000;letter-spacing:0.089px">Attachments/Notizen...</div>
<svg class="a" style="left:360px;top:694px;transform:rotate(45deg)" width="17" height="17" viewBox="0 0 24 24"><path fill="#666" d="M16.5 6v11.5c0 2.21-1.79 4-4 4s-4-1.79-4-4V5c0-1.38 1.12-2.5 2.5-2.5s2.5 1.12 2.5 2.5v10.5c0 .55-.45 1-1 1s-1-.45-1-1V6H10v9.5c0 1.38 1.12 2.5 2.5 2.5s2.5-1.12 2.5-2.5V5c0-2.21-1.79-4-4-4S7 2.790 7 5v12.500c0 3.040 2.460 5.500 5.500 5.500s5.500-2.460 5.500-5.500V6h-1.500z"/></svg>
<div class="sep" style="top:716px"></div>
<div class="mi" style="top:720px;color:#000;letter-spacing:-0.133px">Neuer Unter-Frame</div>
<svg class="a" style="left:730px;top:726.5px" width="6" height="9" viewBox="0 0 6 9"><path d="M1.700 .6l3.700 3.700-3.700 3.700" stroke="#333" fill="none" stroke-width="1.100"/></svg>
<div class="mi" style="top:742px;color:#000;letter-spacing:-0.269px">Neuer Frame</div>
<svg class="a" style="left:730px;top:748.5px" width="6" height="9" viewBox="0 0 6 9"><path d="M1.700 .6l3.700 3.700-3.700 3.700" stroke="#333" fill="none" stroke-width="1.100"/></svg>
</body></html>
